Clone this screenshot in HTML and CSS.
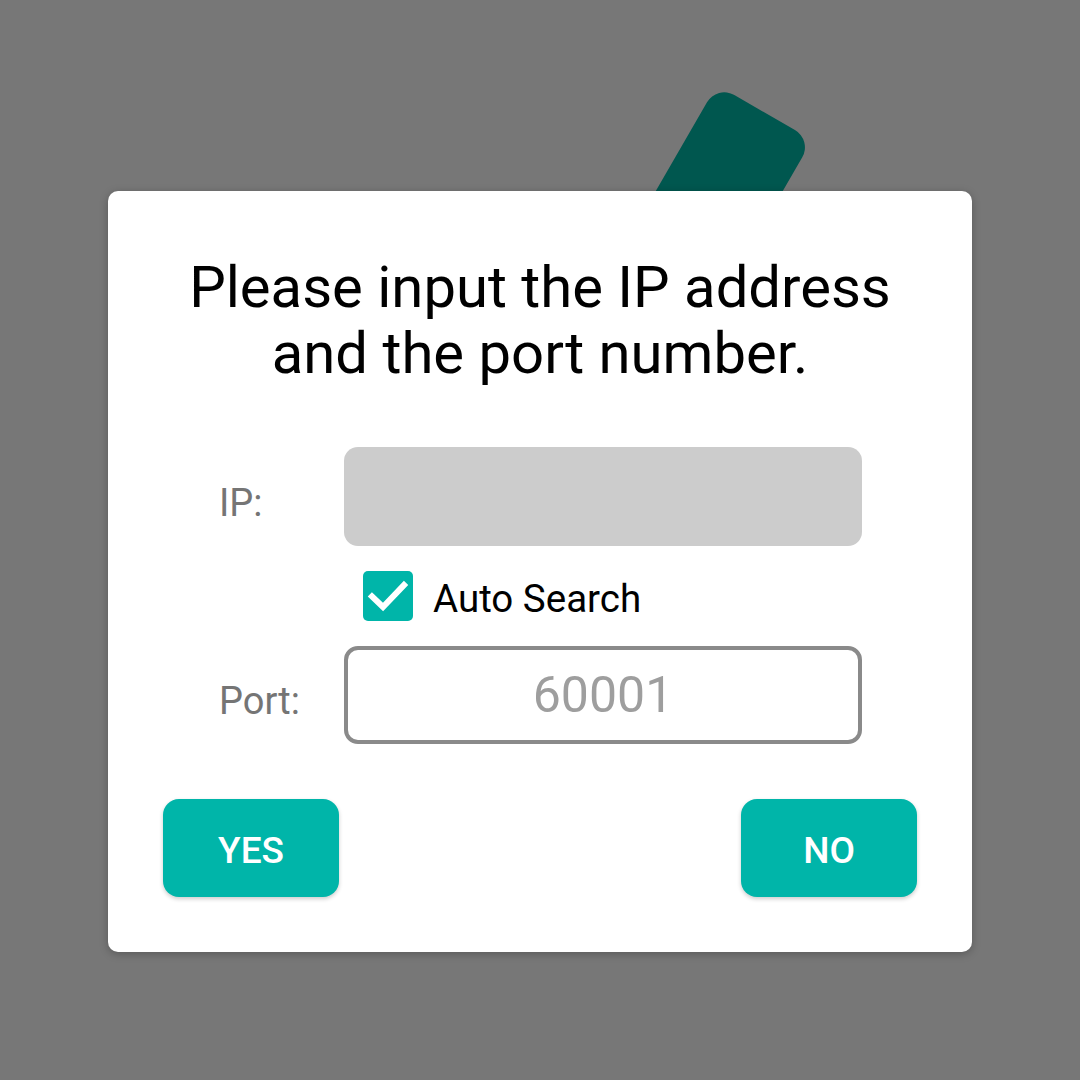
FILE: index.html
```html
<!DOCTYPE html>
<html lang="en">
<head>
    <meta charset="UTF-8">
    <meta name="viewport" content="width=device-width, initial-scale=1.0">
    <title>Connect</title>
    <link rel="stylesheet" href="styles.css">
</head>
<body>

    <!-- Tab peeking out behind the dialog -->
    <div class="back-tab"></div>

    <div class="dialog">
        <h2 class="dialog-title">Please input the IP address<br>and the port number.</h2>

        <div class="form">
            <div class="label">IP:</div>
            <div class="ip-box"></div>

            <div></div>
            <label class="check-row">
                <span class="check-box">
                    <svg viewBox="0 0 50 50" width="50" height="50">
                        <path d="M9 25.5 L20 36 L41 14" fill="none" stroke="#fff" stroke-width="6" stroke-linecap="square"/>
                    </svg>
                </span>
                <span class="check-text">Auto Search</span>
            </label>

            <div class="label">Port:</div>
            <div class="port-box">60001</div>
        </div>

        <div class="buttons">
            <div class="button-box">YES</div>
            <div class="button-box">NO</div>
        </div>
    </div>

</body>
</html>
```

FILE: styles.css
```css
body {
    margin: 0;
    width: 1080px;
    height: 1080px;
    background: #777777;
    font-family: 'Roboto', 'Noto Sans', sans-serif;
    position: relative;
    overflow: hidden;
}

/* Dark teal tab behind the dialog */
.back-tab {
    position: absolute;
    left: 717px;
    top: 85px;
    width: 110px;
    height: 300px;
    background: #00574f;
    border-radius: 20px;
    transform-origin: top left;
    transform: rotate(30deg);
}

.dialog {
    position: relative;
    margin: 191px 0 0 108px;
    width: 864px;
    height: 761px;
    box-sizing: border-box;
    padding-top: 63px;
    background: #fff;
    border-radius: 10px;
    box-shadow: 0 2px 8px rgba(0, 0, 0, 0.25);
}

.dialog-title {
    margin: 0;
    font-size: 58px;
    line-height: 66px;
    font-weight: 400;
    text-align: center;
    color: #000;
}

.form {
    display: grid;
    grid-template-columns: 125px 518px;
    row-gap: 25px;
    margin-top: 61px;
    padding-left: 111px;
    align-items: center;
}

.label {
    font-size: 38px;
    color: #757575;
    padding-top: 12px;
}

.ip-box {
    height: 99px;
    background: #cccccc;
    border-radius: 14px;
}

.check-row {
    display: flex;
    align-items: center;
    gap: 20px;
    padding-left: 19px;
}

.check-box {
    width: 50px;
    height: 50px;
    border-radius: 5px;
    background: #00b5a9;
    display: block;
}

.check-box svg {
    display: block;
}

.check-text {
    font-size: 38.5px;
    color: #000;
    padding-top: 4px;
}

.port-box {
    height: 98px;
    box-sizing: border-box;
    border: 4px solid #8a8a8a;
    border-radius: 14px;
    display: flex;
    align-items: center;
    justify-content: center;
    font-size: 50px;
    color: #9e9e9e;
}

.buttons {
    display: flex;
    justify-content: space-between;
    padding: 0 55px;
    margin-top: 55px;
}

.button-box {
    width: 176px;
    height: 98px;
    border-radius: 16px;
    background: #00b5a9;
    color: #fff;
    font-size: 37px;
    font-weight: 500;
    display: flex;
    align-items: center;
    justify-content: center;
    padding-top: 4px;
    box-sizing: border-box;
    box-shadow: 0 2px 4px rgba(0, 0, 0, 0.2);
}
```
